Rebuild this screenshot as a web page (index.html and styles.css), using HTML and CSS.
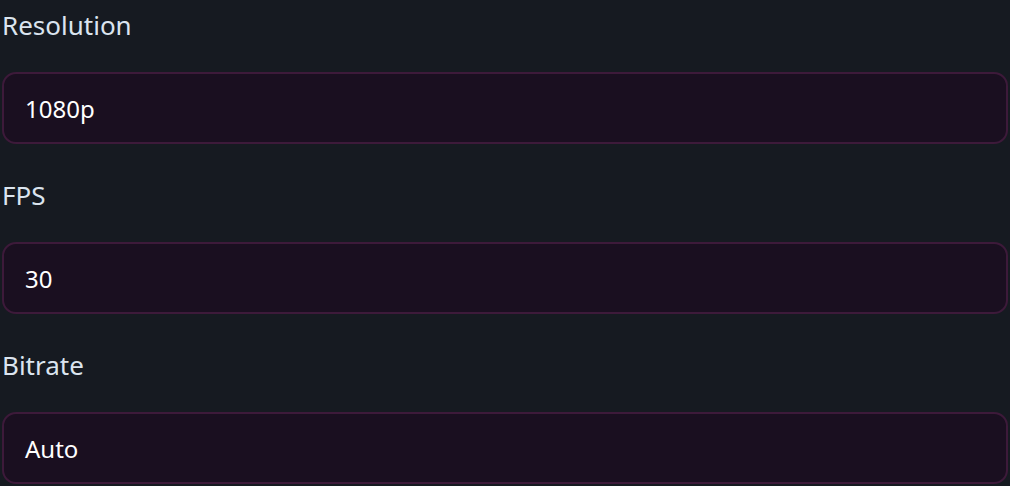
FILE: index.html
```html
<!DOCTYPE html>
<html lang="en">
<head>
<meta charset="utf-8">
<title>Stream settings</title>
<link rel="stylesheet" href="styles.css">
</head>
<body>
<div class="settings">
  <div class="field">
    <label class="field-label" for="res">Resolution</label>
    <div class="field-input" id="res">1080p</div>
  </div>
  <div class="field">
    <label class="field-label" for="fps">FPS</label>
    <div class="field-input" id="fps">30</div>
  </div>
  <div class="field">
    <label class="field-label" for="bitrate">Bitrate</label>
    <div class="field-input" id="bitrate">Auto</div>
  </div>
</div>
</body>
</html>
```
FILE: styles.css
```css
html, body {
  margin: 0;
  padding: 0;
  background: #161a21;
}
body {
  font-family: "Noto Sans", "Open Sans", sans-serif;
  overflow: hidden;
}
.settings {
  display: flex;
  flex-direction: column;
  gap: 31px;
  padding: 5px 2px 0 2px;
}
.field {
  display: flex;
  flex-direction: column;
  gap: 27px;
}
.field-label {
  font-size: 26px;
  line-height: 40px;
  height: 40px;
  color: #dbe4ef;
}
.field-input {
  box-sizing: border-box;
  height: 72px;
  display: flex;
  align-items: center;
  padding: 0 20px 0 21px;
  border: 2px solid #3d1a3a;
  border-radius: 14px;
  background: #1a0f20;
  color: #ffffff;
  font-size: 24px;
}
```
